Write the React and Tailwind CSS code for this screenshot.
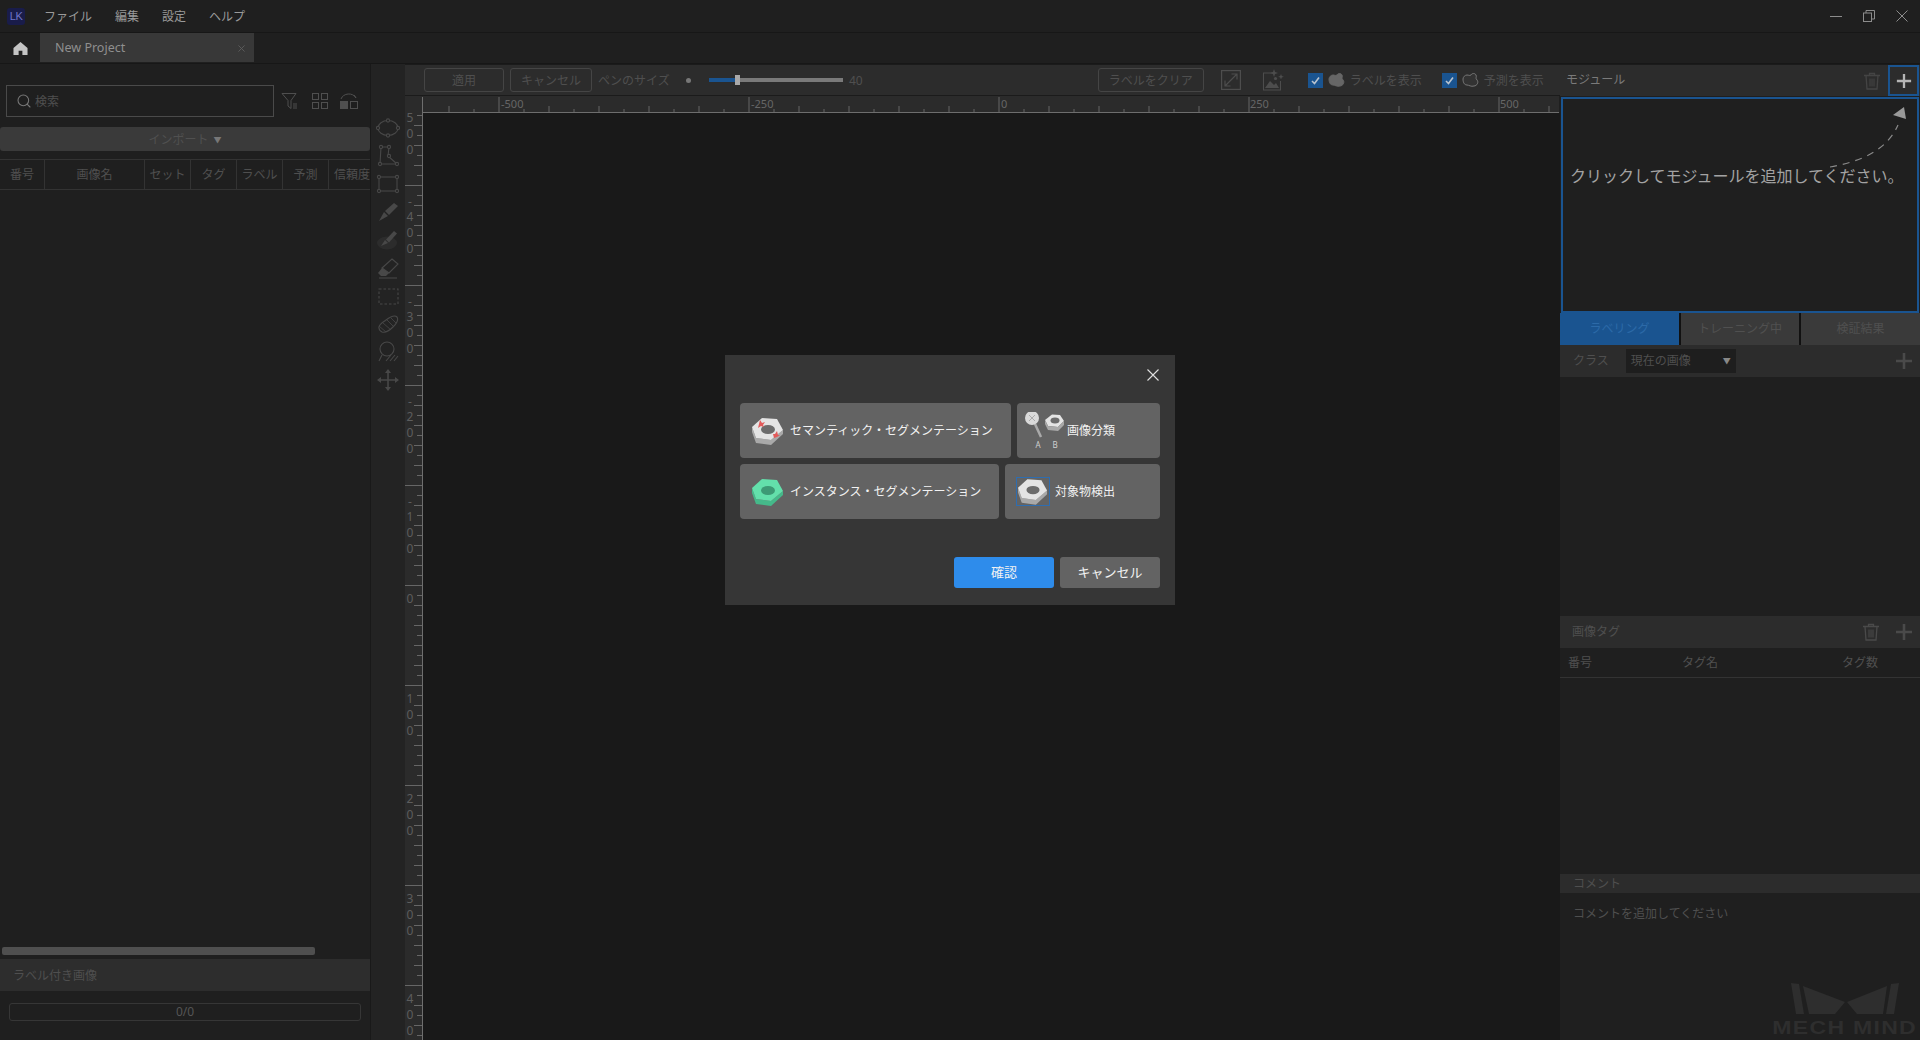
import { Search } from "lucide-react";

const FONT = "[font-family:'Noto_Sans','Noto_Sans_CJK_JP',sans-serif]";

const TABLE_COLUMNS = [
  { label: "番号", width: "w-[45px] justify-center" },
  { label: "画像名", width: "w-[100px] justify-center" },
  { label: "セット", width: "w-[46px] justify-center" },
  { label: "タグ", width: "w-[46px] justify-center" },
  { label: "ラベル", width: "w-[46px] justify-center" },
  { label: "予測", width: "w-[46px] justify-center" },
  { label: "信頼度", width: "w-[41px] pl-[5px]" },
];

const range = (from, to, step) => {
  const out = [];
  for (let v = from; v <= to; v += step) out.push(v);
  return out;
};

const Plus = ({ className, color }) => (
  <svg viewBox="0 0 18 18" className={className}>
    <path d="M9 1v16M1 9h16" stroke={color} strokeWidth="2.6" />
  </svg>
);

const Trash = ({ color }) => (
  <svg viewBox="0 0 18 18" className="w-[18px] h-[18px]" fill="none" stroke={color}>
    <path d="M1 3.5h16M6.5 3.5V1.5h5v2M3 3.5l1 13.5h10l1-13.5" strokeWidth="1.3" />
    <path d="M7 6.5v8M9 6.5v8M11 6.5v8" strokeWidth="1.1" />
  </svg>
);

const ToolIcon = ({ children }) => (
  <div className="h-[28px] flex items-center justify-center">
    <svg viewBox="0 0 24 24" className="w-6 h-6" fill="none" stroke="#484848" strokeWidth="1.1">
      {children}
    </svg>
  </div>
);

const Tools = () => (
  <div className="w-[35px] shrink-0 bg-[#232323] border-l border-[#191919] flex flex-col pt-[50px]">
    <ToolIcon>
      <ellipse cx="12" cy="12" rx="10" ry="7.5" />
      <circle cx="12" cy="4.5" r="1.6" fill="#232323" />
      <circle cx="12" cy="19.5" r="1.6" fill="#232323" />
      <circle cx="2" cy="12" r="1.6" fill="#232323" />
      <circle cx="22" cy="12" r="1.6" fill="#232323" />
    </ToolIcon>
    <ToolIcon>
      <path d="M5 3h8l-1 9 9 8H4z" />
      <circle cx="5" cy="3" r="1.6" fill="#232323" />
      <circle cx="13" cy="3" r="1.6" fill="#232323" />
      <circle cx="13" cy="12" r="1.6" fill="#232323" />
      <circle cx="21" cy="20" r="1.6" fill="#232323" />
      <circle cx="4" cy="20" r="1.6" fill="#232323" />
    </ToolIcon>
    <ToolIcon>
      <rect x="3" y="5" width="18" height="14" />
      <circle cx="3" cy="5" r="1.6" fill="#232323" />
      <circle cx="21" cy="5" r="1.6" fill="#232323" />
      <circle cx="3" cy="19" r="1.6" fill="#232323" />
      <circle cx="21" cy="19" r="1.6" fill="#232323" />
    </ToolIcon>
    <ToolIcon>
      <path d="M18 3l4 3-9 9-4-4z" fill="#484848" stroke="none" />
      <path d="M8 12l4 4-9 5z" fill="#484848" stroke="none" />
    </ToolIcon>
    <ToolIcon>
      <ellipse cx="11" cy="15" rx="10" ry="6.5" fill="#2c2c2c" stroke="none" />
      <path d="M18 3l3 2.500-8 9-3-3z" fill="#484848" stroke="none" />
      <path d="M9 12l3 3-7 3z" fill="#484848" stroke="none" />
    </ToolIcon>
    <ToolIcon>
      <path d="M16 3l6 5-9 9-7-5z" />
      <path d="M6 12l7 5-3 3H5l-3-3z" fill="#484848" stroke="none" />
      <path d="M3 22h18" />
    </ToolIcon>
    <ToolIcon>
      <rect x="3" y="5" width="19" height="15" strokeDasharray="2.5 2" />
    </ToolIcon>
    <ToolIcon>
      <path d="M3 16c-1-3 3-5 7-8 4-3 9-5 11-3 2 3-1 7-4 10-4 4-8 6-11 5-2-1-3-2-3-4z" />
      <path d="M3 14l7 6M7 11l8 7M11 8l7 7M15 6l5 5" strokeWidth="0.8" />
    </ToolIcon>
    <ToolIcon>
      <circle cx="11" cy="9" r="7" />
      <path d="M6 15l-3 6M10 21l5-6M14 21l5-6M18 21l4-5" />
    </ToolIcon>
    <ToolIcon>
      <path d="M12 2v20M2 12h20" strokeWidth="1.6" />
      <path d="M12 1l3 4H9zM12 23l3-4H9zM1 12l4-3v6zM23 12l-4-3v6z" fill="#484848" stroke="none" />
    </ToolIcon>
  </div>
);

const TopRuler = () => (
  <svg width="1154" height="17" className="block shrink-0 bg-[#2b2b2b]">
    {range(450, 1550, 25).map((x) => {
      const major = (x - 500) % 250 === 0;
      const tall = x % 50 === 0;
      return (
        <line key={x} x1={x - 406} x2={x - 406} y1={major ? 1 : tall ? 10 : 13} y2="17" stroke="#666" />
      );
    })}
    <line x1="17.5" x2="17.5" y1="1" y2="17" stroke="#6e6e6e" />
    <line x1="17" x2="1154" y1="16.5" y2="16.5" stroke="#6e6e6e" />
    {[[-500, 500], [-250, 750], [0, 1000], [250, 1249], [500, 1499]].map(([v, x]) => (
      <text key={v} x={x - 404} y="12" fontSize="11" fill="#666" fontFamily="Noto Sans">{v}</text>
    ))}
  </svg>
);

const SideRuler = () => {
  const marks = [
    ["500", 85 + 19],
    ["-400", 185],
    ["-300", 285],
    ["-200", 385],
    ["-100", 485],
    ["0", 585],
    ["100", 685],
    ["200", 785],
    ["300", 885],
    ["400", 985],
  ];
  return (
    <svg width="18" height="927" className="block shrink-0 bg-[#2b2b2b]">
      {range(115, 1040, 10).map((y) => {
        const major = (y - 85) % 100 === 0;
        const tall = (y - 85) % 20 === 0;
        return (
          <line key={y} x1={major ? 0 : tall ? 9 : 12} x2="17" y1={y - 113 + 0.5} y2={y - 113 + 0.5} stroke="#666" />
        );
      })}
      <line x1="17.5" x2="17.5" y1="0" y2="927" stroke="#6e6e6e" />
      {marks.map(([label, y]) =>
        label.split("").map((ch, i) => {
          const neg = label[0] === "-";
          const cy = y - 113 + (neg ? 17 + i * 16 - (i > 0 ? 1 : 0) : 14 + i * 16);
          if (cy > 918) return null;
          return (
            <text key={label + i} x="5" y={cy + 4} textAnchor="middle" fontSize="12" fill="#5d5d5d" fontFamily="Noto Sans">
              {ch}
            </text>
          );
        })
      )}
    </svg>
  );
};

const GhostButton = ({ children, className }) => (
  <div className={`h-[24px] border border-[#454545] rounded-[3px] flex items-center justify-center text-[12px] text-[#4f4f4f] pt-[1px] ${className}`}>
    {children}
  </div>
);

const Check = () => (
  <div className="w-[15px] h-[15px] bg-[#1a5490] flex items-center justify-center shrink-0">
    <svg viewBox="0 0 15 15" className="w-[15px] h-[15px]" fill="none">
      <path d="M4 8l2.5 2.5L11 4.5" stroke="#b9c3cf" strokeWidth="1.6" />
    </svg>
  </div>
);

const Blob = ({ filled }) => (
  <svg viewBox="0 0 17 15" className="w-[17px] h-[15px] shrink-0">
    <path
      d="M1 6c0-2 2-4 4-4 2 0 2 1 4 0 1-2 4-2 5 0 1 2-1 3 1 5 2 2 0 6-3 6-3 1-5-1-7-1-3 0-4-3-4-6z"
      fill={filled ? "#666" : "#333"}
      stroke={filled ? "#666" : "#777"}
    />
  </svg>
);

const Toolbar = () => (
  <div className="h-[32px] shrink-0 bg-[#2c2c2c] border-t border-[#1b1b1b] border-b flex items-center pl-[19px] text-[12px] text-[#4f4f4f]">
    <GhostButton className="w-[80px]">適用</GhostButton>
    <GhostButton className="w-[82px] ml-[6px]">キャンセル</GhostButton>
    <span className="ml-[6px] w-[72px] whitespace-nowrap pt-[1px]">ペンのサイズ</span>
    <div className="w-[5px] h-[5px] rounded-full bg-[#777] ml-[16px]" />
    <div className="ml-[18px] w-[134px] h-[4px] bg-[#7a7a7a] relative">
      <div className="h-full w-[28px] bg-[#1a5490]" />
      <div className="absolute left-[26px] top-[-3px] w-[5px] h-[10px] bg-[#a9a9a9]" />
    </div>
    <span className="ml-[6px] pt-[1px]">40</span>
    <GhostButton className="w-[106px] ml-[235px]">ラベルをクリア</GhostButton>
    <svg viewBox="0 0 20 20" className="w-[20px] h-[20px] ml-[17px]" fill="none" stroke="#4d4d4d" strokeWidth="1.2">
      <rect x="0.6" y="0.6" width="18.8" height="18.8" />
      <path d="M4 16L16 4M10.5 4H16v5.5M4 10.5V16h5.5" />
    </svg>
    <svg viewBox="0 0 22 22" className="w-[22px] h-[22px] ml-[21px]" fill="none" stroke="#4d4d4d" strokeWidth="1.1">
      <path d="M13 4H1.5v17h17v-9" />
      <path d="M3 19l5-7 4 4 2-2 3 5z" fill="#4d4d4d" stroke="none" />
      <circle cx="13.5" cy="9.5" r="1.6" fill="#4d4d4d" stroke="none" />
      <path d="M12 0l1 3 3 1-3 1-1 3-1-3-3-1 3-1zM19 5l.8 2 2 .8-2 .8-.8 2-.8-2-2-.8 2-.8z" fill="#4d4d4d" stroke="none" />
    </svg>
    <div className="ml-[24px] flex items-center gap-[5px]">
      <Check />
      <Blob filled />
      <span className="w-[74px] whitespace-nowrap pt-[1px]">ラベルを表示</span>
    </div>
    <div className="ml-[18px] flex items-center gap-[5px]">
      <Check />
      <Blob />
      <span className="whitespace-nowrap pt-[1px]">予測を表示</span>
    </div>
  </div>
);

const LeftPanel = () => (
  <div className="w-[370px] shrink-0 bg-[#1f1f1f] flex flex-col text-[12px] text-[#4f4f4f]">
    <div className="h-[21px] shrink-0" />
    <div className="flex items-center pl-[6px]">
      <div className="w-[268px] h-[32px] border border-[#4a4a4a] flex items-center pl-[9px] gap-[3px]">
        <Search className="w-[16px] h-[16px] text-[#777]" strokeWidth={1.6} />
        <span className="pt-[1px]">検索</span>
      </div>
      <svg viewBox="0 0 18 18" className="w-[18px] h-[18px] ml-[7px]" fill="none" stroke="#4f4f4f">
        <path d="M1 1.5h14l-5 7v8l-3-2.5V8.5z" />
        <path d="M12 12h4M12 14h4M12 16h4" />
      </svg>
      <svg viewBox="0 0 16 16" className="w-[16px] h-[16px] ml-[13px]" fill="none" stroke="#4f4f4f">
        <rect x="0.5" y="0.5" width="6" height="6" />
        <rect x="9.5" y="0.5" width="6" height="6" />
        <rect x="0.5" y="9.5" width="6" height="6" />
        <rect x="9.5" y="9.5" width="6" height="6" />
      </svg>
      <svg viewBox="0 0 18 16" className="w-[18px] h-[16px] ml-[12px]" fill="none" stroke="#4f4f4f">
        <rect x="0.5" y="8.5" width="7" height="7" fill="#4f4f4f" />
        <rect x="10.5" y="8.5" width="7" height="7" />
        <path d="M1 6c2-6 12-7 15-1M14 2l2 3" />
      </svg>
    </div>
    <div className="mt-[10px] h-[24px] bg-[#3a3a3a] rounded-[3px] flex items-center justify-center gap-[5px] text-[#505050] pt-[1px]">
      インポート
      <span className="text-[8px] text-[#777]">▼</span>
    </div>
    <div className="mt-[8px] h-[31px] border-y border-[#333] flex shrink-0">
      {TABLE_COLUMNS.map((col) => (
        <div key={col.label} className={`${col.width} shrink-0 flex items-center border-r border-[#333] last:border-r-0 whitespace-nowrap overflow-hidden pt-[1px]`}>
          {col.label}
        </div>
      ))}
    </div>
    <div className="flex-1" />
    <div className="ml-[2px] w-[313px] h-[8px] rounded-[2px] bg-[#4f4f4f]" />
    <div className="mt-[4px] h-[32px] bg-[#2d2d2d] flex items-center pl-[13px] pt-[1px]">ラベル付き画像</div>
    <div className="mt-[12px] mb-[19px] ml-[9px] w-[352px] h-[18px] border border-[#363636] rounded-[3px] flex items-center justify-center text-[#555] pb-[1px]">
      0/0
    </div>
  </div>
);

const RightPanel = () => (
  <div className="w-[360px] shrink-0 bg-[#1f1f1f] flex flex-col text-[12px] text-[#4f4f4f]">
    <div className="h-[32px] shrink-0 bg-[#2c2c2c] flex items-center justify-between pl-[6px] text-[#7a7a7a] border-t border-[#1b1b1b]">
      <span className="pb-[2px]">モジュール</span>
      <div className="flex items-center">
        <Trash color="#444" />
        <div className="ml-[7px] mr-[1px] w-[31px] h-[31px] border-2 border-[#1a5490] flex items-center justify-center">
          <Plus className="w-[16px] h-[16px]" color="#b5b5b5" />
        </div>
      </div>
    </div>
    <div className="h-[216px] shrink-0 ml-[1px] mt-[1px] mr-[1px] border-2 border-[#1a5490] relative flex flex-col justify-center pl-[7px] pb-[58px] text-[16px] text-[#a3a3a3] leading-none whitespace-nowrap">
      クリックしてモジュールを追加してください。
      <svg viewBox="0 0 90 70" className="absolute left-[265px] top-[3px] w-[90px] h-[70px]" fill="none">
        <path d="M2 65C30 60 58 50 70 23" stroke="#8a8a8a" strokeWidth="1.2" strokeDasharray="7 6" />
        <path d="M76 5L65 13l13 4z" fill="#999" />
      </svg>
    </div>
    <div className="h-[32px] shrink-0 flex gap-[2px] bg-[#111]">
      <div className="w-[119px] bg-[#1a5490] flex items-center justify-center text-[#2c6aa8]">ラベリング</div>
      <div className="w-[118px] bg-[#3a3a3a] flex items-center justify-center text-[#505050]">トレーニング中</div>
      <div className="flex-1 bg-[#3a3a3a] flex items-center justify-center text-[#505050]">検証結果</div>
    </div>
    <div className="h-[32px] shrink-0 bg-[#2c2c2c] flex items-center pl-[13px] pr-[7px]">
      クラス
      <div className="ml-[17px] w-[110px] h-[24px] bg-[#1e1e1e] flex items-center justify-between px-[5px]">
        現在の画像
        <span className="text-[8px] text-[#888]">▼</span>
      </div>
      <Plus className="w-[18px] h-[18px] ml-auto" color="#4a4a4a" />
    </div>
    <div className="h-[239px] shrink-0" />
    <div className="h-[32px] shrink-0 bg-[#2c2c2c] flex items-center pl-[12px] pr-[7px]">
      画像タグ
      <div className="ml-auto mr-[15px]">
        <Trash color="#4a4a4a" />
      </div>
      <Plus className="w-[18px] h-[18px]" color="#4a4a4a" />
    </div>
    <div className="h-[30px] shrink-0 flex items-center border-b border-[#333] pl-[8px]">
      <span className="w-[114px]">番号</span>
      <span className="w-[160px]">タグ名</span>
      <span>タグ数</span>
    </div>
    <div className="h-[196px] shrink-0" />
    <div className="h-[19px] shrink-0 bg-[#2c2c2c] flex items-center pl-[13px]">コメント</div>
    <div className="pl-[13px] pt-[12px]">コメントを追加してください</div>
    <div className="mt-auto mb-[5px] mr-[3px] flex flex-col items-end">
      <svg viewBox="0 0 108 32" className="w-[108px] h-[32px] mr-[18px]" fill="#2e2e2e">
        <path d="M0 0l8 1 5 30H5zM12 3l42 16-10 12H18zM108 0l-8 1-5 30h8zM96 3L56 19l10 12h26z" />
      </svg>
      <div className="mt-[6px] text-[18px] leading-[14px] font-bold text-[#2e2e2e] tracking-[1px] scale-x-[1.28] origin-right [font-family:'Liberation_Sans',sans-serif] whitespace-nowrap">
        MECH MIND
      </div>
    </div>
  </div>
);

const Nut = ({ top = "#e4e4e4", side = "#a9a9a9", hole = "#6c6c6c", className = "w-[32px] h-[28px]", children }) => (
  <svg viewBox="0 0 32 28" className={`${className} shrink-0`}>
    <polygon points="0,10 4,21 19,23 31,13 31,17 19,28 4,26 0,15" fill={side} />
    <polygon points="0,10 10,1 25,2 31,13 19,23 4,21" fill={top} />
    <ellipse cx="16" cy="12.500" rx="7" ry="4.500" fill={hole} />
    {children}
  </svg>
);

const DialogOption = ({ className, children }) => (
  <div className={`h-[55px] bg-[#636363] rounded-[4px] flex items-center text-[12px] text-[#f2f2f2] whitespace-nowrap ${className}`}>
    {children}
  </div>
);

const Dialog = () => (
  <div className="absolute left-[725px] top-[355px] w-[450px] h-[250px] bg-[#363636] px-[15px] pt-[48px]">
    <svg viewBox="0 0 12 12" className="absolute right-[16px] top-[14px] w-[12px] h-[12px]" stroke="#e0e0e0" strokeWidth="1.1">
      <path d="M0.5 0.5l11 11M11.5 0.5l-11 11" />
    </svg>
    <div className="flex gap-[6px]">
      <DialogOption className="w-[271px] pl-[12px] gap-[6px]">
        <Nut>
          <path d="M8 3l2 3 3-1-2 3 1 2-3-1-3 2 1-4zM22 21l-1-4 2 0 2-3 1 4 2 0-3 2z" fill="#e25a5a" />
        </Nut>
        セマンティック・セグメンテーション
      </DialogOption>
      <DialogOption className="w-[143px] pl-[8px] gap-[2px]">
        <svg viewBox="0 0 40 38" className="w-[40px] h-[38px] shrink-0">
          <path d="M10 12l6 13" stroke="#a9a9a9" strokeWidth="2.5" />
          <circle cx="7" cy="6" r="7" fill="#d9d9d9" />
          <path d="M4 3l6 6M10 3l-6 6" stroke="#aaa" />
          <polygon points="20,8 27,2.500 35,3 39,9 33,15 23,14" fill="#e4e4e4" />
          <polygon points="20,8 23,14 33,15 39,9 39,13 33,19 23,18 20,12" fill="#a9a9a9" />
          <ellipse cx="30" cy="8.500" rx="4.500" ry="3" fill="#6c6c6c" />
          <text x="13" y="36" fontSize="8" fill="#d0d0d0" textAnchor="middle" fontFamily="Noto Sans">A</text>
          <text x="30" y="36" fontSize="8" fill="#d0d0d0" textAnchor="middle" fontFamily="Noto Sans">B</text>
        </svg>
        画像分類
      </DialogOption>
    </div>
    <div className="flex gap-[6px] mt-[6px]">
      <DialogOption className="w-[259px] pl-[12px] gap-[6px]">
        <Nut top="#63e0ab" side="#45b98a" hole="#3d9a75" />
        インスタンス・セグメンテーション
      </DialogOption>
      <DialogOption className="w-[155px] pl-[11px] gap-[5px]">
        <div className="w-[34px] h-[29px] border border-[#2e6db0] flex items-center justify-center shrink-0">
          <Nut className="w-[30px] h-[27px]" />
        </div>
        対象物検出
      </DialogOption>
    </div>
    <div className="flex justify-end gap-[6px] mt-[38px] text-[13px] text-[#f2f2f2]">
      <div className="w-[100px] h-[31px] bg-[#2e8ceb] rounded-[3px] flex items-center justify-center">確認</div>
      <div className="w-[100px] h-[31px] bg-[#636363] rounded-[3px] flex items-center justify-center">キャンセル</div>
    </div>
  </div>
);

const App = () => (
  <div className={`w-[1920px] h-[1040px] overflow-hidden relative bg-[#1f1f1f] flex flex-col ${FONT}`}>
    <div className="h-[33px] shrink-0 flex items-center border-b border-[#171717] pl-[7px] text-[12px] text-[#9a9a9a]">
      <div className="w-[18px] h-[17px] rounded-[3px] bg-[#191c4a] text-[#6f74c8] text-[11px] tracking-[-0.5px] flex items-center justify-center leading-none [font-family:'Liberation_Sans',sans-serif]">LK</div>
      <span className="ml-[19px] pt-[1px]">ファイル</span>
      <span className="ml-[23px] pt-[1px]">編集</span>
      <span className="ml-[23px] pt-[1px]">設定</span>
      <span className="ml-[23px] pt-[1px]">ヘルプ</span>
      <div className="ml-auto flex items-center gap-[21px] pr-[12px]">
        <svg viewBox="0 0 12 12" className="w-[12px] h-[12px]" stroke="#8c8c8c"><path d="M0 6.500h12" /></svg>
        <svg viewBox="0 0 12 12" className="w-[12px] h-[12px]" fill="none" stroke="#8c8c8c">
          <rect x="0.500" y="3" width="8" height="8.500" />
          <path d="M3 3V0.500h8.500V9H8.500" />
        </svg>
        <svg viewBox="0 0 12 12" className="w-[12px] h-[12px]" stroke="#8c8c8c"><path d="M0.500 0.500l11 11M11.500 0.500l-11 11" /></svg>
      </div>
    </div>
    <div className="h-[31px] shrink-0 flex border-b border-[#171717]">
      <div className="w-[40px] flex items-center justify-center">
        <svg viewBox="0 0 16 16" className="w-[15px] h-[15px]" fill="#c4c4c4">
          <path d="M8 1L0.500 7.500V15H6v-4.500h4V15h5.500V7.500z" />
        </svg>
      </div>
      <div className="w-[214px] bg-[#383838] flex items-center justify-between pl-[15px] pr-[9px] pt-[1px] text-[12.500px] text-[#8f8f8f] mb-[1px]">
        New Project
        <svg viewBox="0 0 8 8" className="w-[7px] h-[7px]" stroke="#5e5e5e"><path d="M0.500 0.500l7 7M7.500 0.500l-7 7" /></svg>
      </div>
    </div>
    <div className="flex-1 flex min-h-0">
      <LeftPanel />
      <Tools />
      <div className="flex-1 min-w-0 flex flex-col">
        <Toolbar />
        <TopRuler />
        <div className="flex-1 flex min-h-0 bg-[#191919]">
          <SideRuler />
        </div>
      </div>
      <RightPanel />
    </div>
    <Dialog />
  </div>
);

export default App;
